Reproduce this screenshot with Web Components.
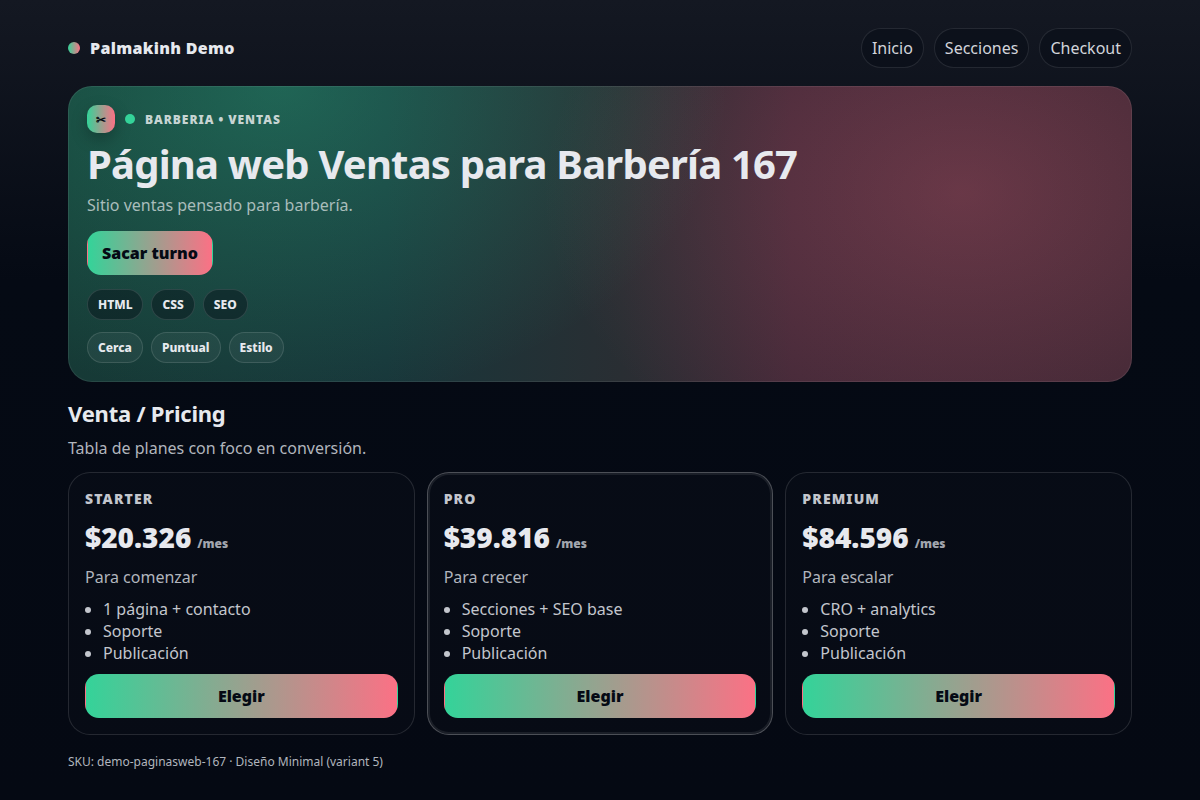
<!DOCTYPE html>
<html lang="es">
<head>
<meta charset="utf-8">
<meta name="viewport" content="width=device-width, initial-scale=1">
<title>Palmakinh Demo</title>
<style>
:root{--a:#34d399;--b:#fb7185;--ink:#050a14;--text:#e7e9ee;--muted:#b1b5bd;--line:rgba(255,255,255,.12);--grad:linear-gradient(90deg,var(--a),var(--b))}
html{background:#050913}
body{margin:0;min-height:100vh;color:var(--text);font:16px "Noto Sans",sans-serif;background:linear-gradient(180deg,#141822 0,#050a14 280px,#050913 100%)}
</style>
</head>
<body>
<demo-page></demo-page>
<script>
const define = (name, html, setup) => {
  const template = document.createElement('template');
  template.innerHTML = html;
  customElements.define(name, class extends HTMLElement {
    constructor() {
      super();
      this.attachShadow({mode: 'open'}).append(template.content.cloneNode(true));
    }
    connectedCallback() { if (setup) setup(this, this.shadowRoot); }
  });
};

define('nav-pill', `
<style>
:host{display:block}
a{display:block;padding:8px 10px;border:1px solid rgba(255,255,255,.1);border-radius:20px;background:rgba(5,10,20,.4);color:#d2d4da;line-height:22px;text-decoration:none}
</style>
<a><slot></slot></a>`, (host, root) => { root.querySelector('a').href = host.getAttribute('href'); });

define('site-header', `
<style>
:host{display:block}
header{display:flex;align-items:center;justify-content:space-between;flex-wrap:wrap;gap:10px;padding:10px 0}
.brand{display:flex;align-items:center;gap:10px;font-weight:900;letter-spacing:.02em}
.dot{width:12px;height:12px;border-radius:50%;background:var(--grad)}
nav{display:flex;flex-wrap:wrap;gap:10px}
</style>
<header><div class="brand"><span class="dot"></span><span>Palmakinh Demo</span></div>
<nav><nav-pill href="#inicio">Inicio</nav-pill><nav-pill href="#secciones">Secciones</nav-pill><nav-pill href="#checkout">Checkout</nav-pill></nav></header>`);

define('action-button', `
<style>
:host{display:block}
button{display:block;width:100%;box-sizing:border-box;padding:10px 14px;border:1px solid transparent;border-radius:14px;background:var(--grad);color:var(--ink);font:900 16px/22px "Noto Sans",sans-serif;cursor:pointer}
</style>
<button type="button"><slot></slot></button>`);

define('tag-chip', `
<style>
:host{display:block;padding:6px 10px;border:1px solid rgba(255,255,255,.12);border-radius:16px;background:rgba(5,10,20,.4);font-size:12px;line-height:17px;font-weight:800}
:host([light]){background:rgba(255,255,255,.05)}
</style>
<slot></slot>`);

define('hero-banner', `
<style>
:host{display:block;margin-top:8px;padding:18px;border:1px solid rgba(255,255,255,.08);border-radius:24px;background:radial-gradient(560px 400px at 20% 0%,rgba(52,211,153,.29),transparent 80%) border-box,radial-gradient(560px 400px at 84% 36%,rgba(251,113,133,.23),transparent 75%) border-box,linear-gradient(90deg,#163a36,#18363a 30%,#292e33 52%,#3e2736 68%,#3c2633) border-box}
.kicker{display:flex;align-items:center;gap:10px;color:#c7d5d3;font-size:12px;line-height:17px;font-weight:900;letter-spacing:.08em}
.icon{display:grid;place-items:center;width:28px;height:28px;border-radius:10px;background:var(--grad);color:var(--ink);box-shadow:0 6px 16px rgba(0,0,0,.25);letter-spacing:0}
.dot{width:10px;height:10px;border-radius:50%;background:var(--a)}
h1{margin:10px 0 9px;font-size:40px;line-height:42px;font-weight:700;letter-spacing:-.02em}
p{margin:0;color:#a9bdbb;line-height:22px}
.action{display:flex;margin:15px 0 14px}
.chips{display:flex;flex-wrap:wrap;gap:8px}
.chips+.chips{margin-top:12px}
</style>
<div class="kicker"><span class="icon">✂</span><span class="dot"></span><span>BARBERIA • VENTAS</span></div>
<h1>Página web Ventas para Barbería 167</h1>
<p>Sitio ventas pensado para barbería.</p>
<div class="action"><action-button>Sacar turno</action-button></div>
<div class="chips"><tag-chip>HTML</tag-chip><tag-chip>CSS</tag-chip><tag-chip>SEO</tag-chip></div>
<div class="chips"><tag-chip light>Cerca</tag-chip><tag-chip light>Puntual</tag-chip><tag-chip light>Estilo</tag-chip></div>`);

define('plan-card', `
<style>
:host{display:block;padding:16px;border:1px solid var(--line);border-radius:22px;background:rgba(255,255,255,.01)}
:host([featured]){border-color:rgba(255,255,255,.28);box-shadow:inset 0 0 0 2px rgba(255,255,255,.08)}
h3{margin:0;color:#c3c6cd;font-size:14px;line-height:20px;font-weight:900;letter-spacing:.08em}
.price{display:flex;align-items:baseline;gap:6px;margin:9px 0 10px;font-size:28px;line-height:38px;font-weight:900}
small{color:#a2a6ae;font-size:12px;line-height:16px}
p{margin:0 0 10px;color:var(--muted);line-height:22px}
ul{margin:0 0 10px;padding-left:18px;color:#c3c6cd;line-height:22px}
</style>
<h3></h3><div class="price"><span></span> <small>/mes</small></div><p></p>
<ul><slot></slot></ul><action-button>Elegir</action-button>`, (host, root) => {
  root.querySelector('h3').textContent = host.getAttribute('name');
  root.querySelector('.price span').textContent = host.getAttribute('price');
  root.querySelector('p').textContent = host.getAttribute('note');
});

define('pricing-section', `
<style>
:host{display:block;margin-top:16px}
h2{margin:0 0 9px;font-size:22px;line-height:30px;font-weight:700;letter-spacing:-.01em}
p{margin:0 0 13px;color:var(--muted);line-height:22px}
.plans{display:grid;grid-template-columns:repeat(3,minmax(0,1fr));gap:12px}
@media(max-width:760px){.plans{grid-template-columns:1fr}}
</style>
<h2>Venta / Pricing</h2>
<p>Tabla de planes con foco en conversión.</p>
<div class="plans">
<plan-card name="STARTER" price="$20.326" note="Para comenzar"><li>1 página + contacto</li><li>Soporte</li><li>Publicación</li></plan-card>
<plan-card featured name="PRO" price="$39.816" note="Para crecer"><li>Secciones + SEO base</li><li>Soporte</li><li>Publicación</li></plan-card>
<plan-card name="PREMIUM" price="$84.596" note="Para escalar"><li>CRO + analytics</li><li>Soporte</li><li>Publicación</li></plan-card>
</div>`);

define('demo-page', `
<style>
:host{display:block;box-sizing:border-box;max-width:1100px;margin:0 auto;padding:18px}
footer{margin-top:18px;color:var(--muted);font-size:12px;line-height:17px}
</style>
<site-header></site-header>
<main><hero-banner id="inicio"></hero-banner><pricing-section id="secciones"></pricing-section></main>
<footer>SKU: demo-paginasweb-167 · Diseño Minimal (variant 5)</footer>`);
</script>
</body>
</html>
